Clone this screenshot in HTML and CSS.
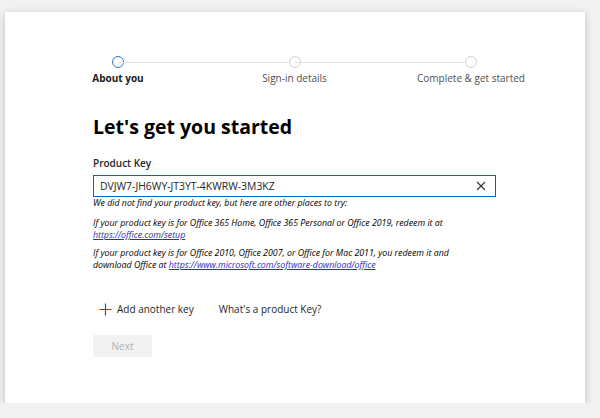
FILE: index.html
```html
<!DOCTYPE html>
<html lang="en">
<head>
  <meta charset="UTF-8" />
  <title>Let's get you started</title>
  <link rel="stylesheet" href="styles.css">
</head>
<body>
  <div class="card">

    <!-- progress steps: circles sit on the track, labels hang centred under them -->
    <div class="steps">
      <div class="step active">
        <span class="dot"></span>
        <span class="step-label">About you</span>
      </div>
      <div class="track"></div>
      <div class="step">
        <span class="dot"></span>
        <span class="step-label">Sign-in details</span>
      </div>
      <div class="track"></div>
      <div class="step">
        <span class="dot"></span>
        <span class="step-label">Complete &amp; get started</span>
      </div>
    </div>

    <h1>Let's get you started</h1>

    <label class="field-label" for="productKey">Product Key</label>
    <div class="key-input">
      <input type="text" id="productKey" value="DVJW7-JH6WY-JT3YT-4KWRW-3M3KZ" />
      <button class="clear" aria-label="Clear">
        <svg width="10" height="10" viewBox="0 0 10 10">
          <path d="M1 1 L9 9 M9 1 L1 9" stroke="#333" stroke-width="1.1" fill="none" />
        </svg>
      </button>
    </div>

    <div class="hint">
      <p class="hint-first">We did not find your product key, but here are other places to try:</p>
      <p>If your product key is for Office 365 Home, Office 365 Personal or Office 2019, redeem it at <a href="#">https://office.com/setup</a></p>
      <p class="hint-last"><span>If your product key is for Office 2010, Office 2007, or Office for Mac 2011, you redeem it and</span> <span>download Office at</span> <a href="#">https://www.microsoft.com/software-download/office</a></p>
    </div>

    <div class="links">
      <button class="link-btn">
        <svg width="13" height="13" viewBox="0 0 13 13">
          <path d="M6.5 0.5 V12.5 M0.5 6.5 H12.5" stroke="#0067b8" stroke-width="1.2" fill="none" />
        </svg>
        Add another key
      </button>
      <button class="link-btn">What's a product Key?</button>
    </div>

    <button class="next" disabled>Next</button>
  </div>
</body>
</html>
```

FILE: styles.css
```css
/* page */
body {
  margin: 0;
  background: #f2f2f2;
  font-family: "Open Sans", "Noto Sans", Arial, sans-serif;
  color: #1b1b1b;
}

.card {
  box-sizing: border-box;
  width: 580px;
  height: 391px;
  margin: 12px 0 0 5px;
  padding: 44px 60px 0 88px;
  background: #fff;
  box-shadow: 0 2px 8px rgba(0, 0, 0, 0.22);
}

/* steps */
.steps {
  display: flex;
  width: 353px;
  height: 29px;
  margin-left: 25px;
}

.track {
  flex: 1;
  height: 1px;
  margin-top: 6px;
  background: #e1e1e1;
}

/* zero-width column, so the label centres on the dot */
.step {
  width: 0;
  display: flex;
  flex-direction: column;
  align-items: center;
  white-space: nowrap;
}

.dot {
  flex: none;
  box-sizing: border-box;
  width: 12px;
  height: 12px;
  border: 1.3px solid #d2d2d2;
  border-radius: 50%;
  background: #fff;
  box-shadow: 0 0 0 2px #fff;
}

.step.active .dot {
  border-color: #2f7bc0;
  box-shadow: none;
}

.step-label {
  margin-top: 3px;
  font-size: 10px;
  line-height: 14px;
  color: #505050;
}

.step.active .step-label {
  font-weight: 700;
  color: #1b1b1b;
}

h1 {
  margin: 28px 0 0;
  font-size: 19.5px;
  line-height: 28px;
  font-weight: 700;
  color: #000;
}

/* product key field */
.field-label {
  display: block;
  margin-top: 15px;
  font-size: 10px;
  line-height: 14px;
  font-weight: 600;
  color: #262626;
}

.key-input {
  box-sizing: border-box;
  display: flex;
  align-items: center;
  width: 403px;
  height: 22px;
  margin-top: 5px;
  border: 1.5px solid #0067b8;
}

.key-input input {
  flex: 1;
  border: none;
  outline: none;
  padding: 0 6px;
  font-family: inherit;
  font-size: 10.4px;
  color: #262626;
  background: transparent;
}

.clear {
  display: flex;
  padding: 0 9px;
  border: none;
  background: none;
}

/* hints */
.hint {
  width: 390px;
  font-size: 8.8px;
  font-style: italic;
  line-height: 12.2px;
  color: #000;
}

.hint p {
  margin: 8px 0 0;
}

.hint p.hint-first {
  margin: 0;
}

.hint p.hint-last {
  margin-top: 5.5px;
}

.hint a {
  color: #2a2ad0;
}

/* bottom links */
.links {
  display: flex;
  align-items: center;
  gap: 25px;
  margin-top: 30.5px;
}

.link-btn {
  display: flex;
  align-items: center;
  gap: 5px;
  padding: 0;
  border: none;
  background: none;
  font-family: inherit;
  font-size: 10px;
  line-height: 14px;
  color: #262626;
}

.link-btn svg {
  margin-left: 6px;
}

.next {
  display: block;
  width: 59px;
  height: 22px;
  margin-top: 19px;
  border: none;
  background: #f2f2f2;
  font-family: inherit;
  font-size: 10px;
  color: #b3b3b3;
}
```
